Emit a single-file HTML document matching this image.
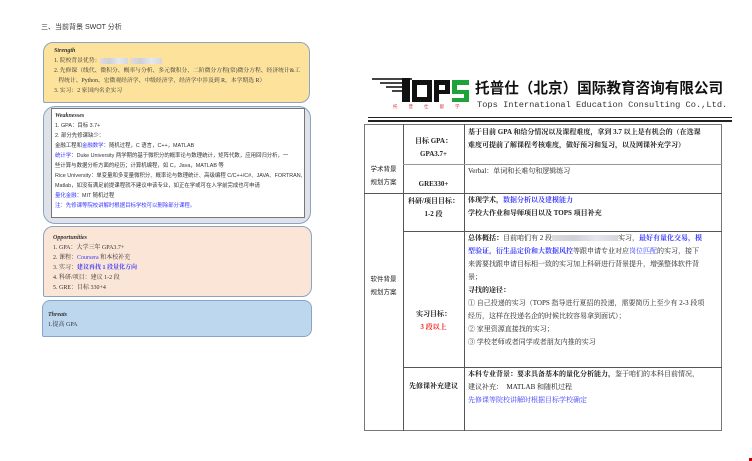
<!DOCTYPE html>
<html><head><meta charset="utf-8">
<style>
*{margin:0;padding:0;box-sizing:border-box}
body{width:752px;height:461px;background:#fff;position:relative;overflow:hidden;font-family:"Liberation Serif","Noto Serif CJK SC","Noto Sans CJK SC",serif;color:#333}
.a{position:absolute}
.box{position:absolute;border:1px solid #8aa4c6;border-radius:9px}
.t{font-size:6px;line-height:10px;white-space:nowrap}
.h{font-style:italic;font-weight:bold;font-size:6px}
.b{color:#3a3aff}
.blur{display:inline-block;background:linear-gradient(90deg,#ddd,#cfcfd8,#e6e6ee,#d6d6de);height:6px;vertical-align:middle}
.tb{font-size:7px;line-height:13px;color:#222}
.bo{font-weight:bold}
.line{position:absolute;background:#555}
</style></head><body>
<div class="a" style="left:41px;top:22px;font-size:7px;font-family:'Liberation Sans','Noto Sans CJK SC',sans-serif">三、当前背景 SWOT 分析</div>

<div class="box" style="left:43px;top:42px;width:267px;height:61px;background:#fde29c;border-radius:10px 10px 10px 2px"></div>
<div class="a t" style="left:54px;top:46px;font-size:5.8px"><div class="h">Strength</div>
1. 院校背景优势：<span class="blur" style="width:28px"></span> <span class="blur" style="width:32px"></span><br>
2. 先修课（线代、微积分、概率与分析、多元微积分、二阶微分方程(常)微分方程、经济统计&amp;工<br>
&nbsp;&nbsp;&nbsp;程统计、Python、宏微观经济学、中级经济学，经济学中涉及到 R，本学期选 R）<br>
3. 实习：2 家国内名企实习</div>

<div class="box" style="left:43px;top:106px;width:268px;height:118px;background:#dfe2e8;border-radius:12px"></div>
<div class="a" style="left:51px;top:108px;width:254px;height:110px;background:#fff;border:1px solid #777"></div>
<div class="a t" style="left:55px;top:111px;font-family:'Liberation Sans','Noto Sans CJK SC',sans-serif;font-size:5.4px"><div class="h" style="font-family:'Liberation Serif',serif">Weaknesses</div>
1. GPA：目标 3.7+<br>2. 部分先修课缺少：<br>
金融工程和<span class="b">金融数学</span>：随机过程，C 语言，C++，MATLAB<br>
<span class="b">统计学</span>：Duke University 两学期的基于微积分的概率论与数理统计，矩阵代数，应用回归分析，一<br>
些计算与数据分析方面的经历；计算机编程，如 C，Java，MATLAB 等<br>
Rice University：单变量和多变量微积分、概率论与数理统计、高级编程 C/C++/C#、JAVA、FORTRAN,<br>
Matlab，如没有满足前提课程就不建议申该专业，如正在学或可在入学前完成也可申请<br>
<span class="b">量化金融</span>：MIT 随机过程<br>
<span class="b">注：先修课等院校讲解时根据目标学校可以删除部分课程。</span></div>

<div class="box" style="left:43px;top:226px;width:269px;height:71px;background:#fbe5d7;border-radius:10px 10px 10px 2px"></div>
<div class="a t" style="left:53px;top:233px"><div class="h">Opportunities</div>
1. GPA：大学三年 GPA3.7+<br>2. 课程：<span class="b">Coursera</span> 和本校补充<br>
3. 实习：<span class="b bo">建议再找 1 段量化方向</span><br>4. 科研/项目：建议 1-2 段<br>5. GRE：目标 330+4</div>

<div class="box" style="left:42px;top:300px;width:270px;height:37px;background:#bdd7ee;border-radius:8px 8px 8px 2px"></div>
<div class="a t" style="left:48px;top:310px"><div class="h">Threats</div>1.提高 GPA</div>

<!-- logo -->
<div class="a" style="left:372px;top:78px;width:40px;height:2px;background:#444"></div>
<div class="a" style="left:380px;top:82px;width:30px;height:2px;background:#444"></div>
<div class="a" style="left:386px;top:86px;width:24px;height:2px;background:#444"></div>
<div class="a" style="left:392px;top:90px;width:18px;height:2px;background:#444"></div>
<div class="a" style="left:402px;top:78px;width:8px;height:24px;background:#111"></div>
<div class="a" style="left:412px;top:80px;width:20px;height:22px;border:5px solid #111"></div>
<div class="a" style="left:434px;top:80px;width:16px;height:22px;background:#111"></div>
<div class="a" style="left:439px;top:85px;width:6px;height:5px;background:#fff"></div>
<div class="a" style="left:439px;top:94px;width:11px;height:8px;background:#fff"></div>
<div class="a" style="left:452px;top:80px;width:17px;height:22px;background:#1ea33a"></div>
<div class="a" style="left:457px;top:85px;width:12px;height:5px;background:#fff"></div>
<div class="a" style="left:452px;top:94px;width:12px;height:4px;background:#fff"></div>
<div class="a" style="left:393px;top:104px;font-size:4.5px;color:#d22;font-family:'Noto Sans CJK SC',sans-serif;letter-spacing:11px;white-space:nowrap">托普仕留学</div>
<div class="a" style="left:475px;top:79px;font-size:14.6px;font-weight:bold;font-family:'Noto Sans CJK SC',sans-serif;color:#111;white-space:nowrap;letter-spacing:0;line-height:18px">托普仕（北京）国际教育咨询有限公司</div>
<div class="a" style="left:477px;top:100px;font-size:8.7px;font-family:'Liberation Mono',monospace;color:#333;white-space:nowrap;line-height:11px">Tops International Education Consulting Co.,Ltd.</div>
<div class="a" style="left:368px;top:117px;width:364px;height:1px;background:#222"></div>
<div class="a" style="left:368px;top:120px;width:364px;height:1.5px;background:#222"></div>

<!-- table -->
<div class="a" style="left:364px;top:124px;width:358px;height:307px;border:1px solid #777"></div>
<div class="line" style="left:403px;top:124px;width:1px;height:307px"></div>
<div class="line" style="left:464px;top:124px;width:1px;height:307px"></div>
<div class="line" style="left:403px;top:164px;width:319px;height:1px;background:#999"></div>
<div class="line" style="left:364px;top:193px;width:358px;height:1px"></div>
<div class="line" style="left:403px;top:231px;width:319px;height:1px"></div>
<div class="line" style="left:403px;top:367px;width:319px;height:1px"></div>

<div class="a tb" style="left:364px;top:162px;width:39px;text-align:center;font-family:'Noto Sans CJK SC',sans-serif;font-size:6.5px">学术背景<br>规划方案</div>
<div class="a tb" style="left:364px;top:272px;width:39px;text-align:center;font-family:'Noto Sans CJK SC',sans-serif;font-size:6.5px">软件背景<br>规划方案</div>
<div class="a tb bo" style="left:403px;top:135px;width:61px;text-align:center">目标 GPA：<br>GPA3.7+</div>
<div class="a tb bo" style="left:403px;top:178px;width:61px;text-align:center">GRE330+</div>
<div class="a tb bo" style="left:403px;top:195px;width:61px;text-align:center">科研/项目目标：<br>1-2 段</div>
<div class="a tb bo" style="left:403px;top:308px;width:61px;text-align:center">实习目标：<br><span style="color:#e22">3 段以上</span></div>
<div class="a tb bo" style="left:403px;top:380px;width:61px;text-align:center">先修课补充建议</div>

<div class="a tb bo" style="left:468px;top:126px;white-space:nowrap">基于目前 GPA 和给分情况以及课程难度，拿到 3.7 以上是有机会的（在选课<br>难度可提前了解课程考核难度，做好预习和复习，以及网课补充学习）</div>
<div class="a tb b" style="left:468px;top:165px">Verbal：单词和长难句和逻辑练习</div>
<div class="a tb bo" style="left:468px;top:194px;white-space:nowrap">体现学术，<span class="b">数据分析以及建模能力</span><br>学校大作业和导师项目以及 TOPS 项目补充</div>
<div class="a tb" style="left:468px;top:232px;white-space:nowrap"><span class="bo">总体概括：</span>目前咱们有 2 段<span class="blur" style="width:66px"></span>实习，<span class="b bo">最好有量化交易，模<br>型验证，衍生品定价和大数据风控</span>等跟申请专业对应<span class="b">岗位匹配</span>的实习，接下<br>来需要找跟申请目标相一致的实习加上科研进行背景提升，增强整体软件背<br>景；<br><span class="bo">寻找的途径：</span><br>① 自己投递的实习（TOPS 指导进行夏招的投递，需要简历上至少有 2-3 段项<br>经历，这样在投递名企的时候比较容易拿到面试）；<br>② 家里资源直接找的实习；<br>③ 学校老师或者同学或者朋友内推的实习</div>
<div class="a tb" style="left:468px;top:368px;white-space:nowrap"><span class="bo">本科专业背景：要求具备基本的量化分析能力，</span>鉴于咱们的本科目前情况，<br>建议补充：&nbsp;&nbsp;MATLAB 和随机过程<br><span class="b">先修课等院校讲解时根据目标学校确定</span></div>

<div class="a" style="left:749px;top:458px;width:3px;height:3px;background:#c00"></div>
</body></html>
